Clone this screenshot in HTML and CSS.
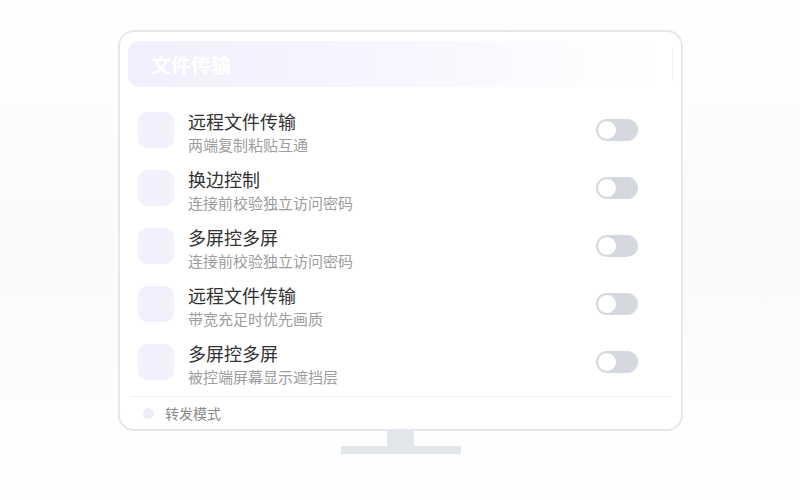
FILE: index.html
```html
<!DOCTYPE html>
<html lang="zh-CN">
<head>
    <meta charset="UTF-8">
    <meta name="viewport" content="width=device-width, initial-scale=1.0">
    <title>文件传输</title>
    <link rel="stylesheet" href="styles.css">
</head>
<body>
    <div class="monitor">
        <div class="screen">
            <div class="header">
                <span class="header-title">文件传输</span>
                <span class="header-line"></span>
            </div>

            <div class="list">
                <div class="row">
                    <div class="row-icon"></div>
                    <div class="row-text">
                        <div class="row-title">远程文件传输</div>
                        <div class="row-sub">两端复制粘贴互通</div>
                    </div>
                    <div class="switch"><span class="knob"></span></div>
                </div>
                <div class="row">
                    <div class="row-icon"></div>
                    <div class="row-text">
                        <div class="row-title">换边控制</div>
                        <div class="row-sub">连接前校验独立访问密码</div>
                    </div>
                    <div class="switch"><span class="knob"></span></div>
                </div>
                <div class="row">
                    <div class="row-icon"></div>
                    <div class="row-text">
                        <div class="row-title">多屏控多屏</div>
                        <div class="row-sub">连接前校验独立访问密码</div>
                    </div>
                    <div class="switch"><span class="knob"></span></div>
                </div>
                <div class="row">
                    <div class="row-icon"></div>
                    <div class="row-text">
                        <div class="row-title">远程文件传输</div>
                        <div class="row-sub">带宽充足时优先画质</div>
                    </div>
                    <div class="switch"><span class="knob"></span></div>
                </div>
                <div class="row">
                    <div class="row-icon"></div>
                    <div class="row-text">
                        <div class="row-title">多屏控多屏</div>
                        <div class="row-sub">被控端屏幕显示遮挡层</div>
                    </div>
                    <div class="switch"><span class="knob"></span></div>
                </div>
            </div>

            <!-- 底部 -->
            <div class="footer">
                <span class="dot"></span>
                <span class="footer-text">转发模式</span>
            </div>
        </div>
        <div class="neck"></div>
        <div class="base"></div>
    </div>
</body>
</html>
```

FILE: styles.css
```css
body {
    margin: 0;
    padding: 0;
    height: 500px;
    overflow: hidden;
    font-family: "Noto Sans CJK SC", "Noto Sans", sans-serif;
    background: linear-gradient(180deg, #ffffff 0%, #f9fafb 50%, #ffffff 100%);
}
.monitor {
    display: flex;
    flex-direction: column;
    align-items: center;
    padding-top: 30px;
    padding-left: 1px;
}
.screen {
    background: #ffffff;
    border: 2px solid #e4e7eb;
    border-radius: 16px;
    padding: 9px 8px 0 8px;
    width: 545px;
}
.header {
    height: 46px;
    border-radius: 12px;
    display: flex;
    align-items: center;
    justify-content: space-between;
    padding-left: 23px;
    background: linear-gradient(90deg, #f1effd 0%, #f7f5fe 45%, #ffffff 96%);
}
.header-title {
    color: #ffffff;
    font-size: 20px;
    font-weight: 700;
}
.header-line {
    width: 1px;
    height: 34px;
    background: #f1f2f5;
}
.list {
    padding: 14px 0 5px 0;
}
.row {
    display: flex;
    align-items: center;
    padding: 11px 35px 11px 10px;
}
.row-icon {
    width: 36px;
    height: 36px;
    border-radius: 9px;
    background: #f3f0fd;
    flex-shrink: 0;
}
.row-text {
    flex: 1;
    margin: -3px 0 -9px 14px; /* 文字块比图标高，只占图标的高度 */
}
.row-title {
    font-size: 18px;
    line-height: 24px;
    color: #333333;
}
.row-sub {
    font-size: 15px;
    line-height: 24px;
    color: #9d9d9d;
}
.switch {
    width: 42px;
    height: 22px;
    border-radius: 11px;
    background: #d5d8de;
    position: relative;
}
.knob {
    position: absolute;
    left: 1px;
    top: 1px;
    width: 18px;
    height: 18px;
    border-radius: 50%;
    background: #ffffff;
    border: 1px solid #d2d5db;
}
.footer {
    border-top: 1px solid #eeeff2;
    margin: 0 2px;
    height: 32px;
    display: flex;
    align-items: center;
    padding-left: 13px;
}
.dot {
    width: 11px;
    height: 11px;
    border-radius: 50%;
    background: #efecfc;
}
.footer-text {
    margin-left: 11px;
    font-size: 14px;
    color: #8a8a8a;
}
.neck {
    width: 27px;
    height: 15px;
    background: #e2e5ea;
}
.base {
    width: 120px;
    height: 8px;
    background: #e2e5ea;
}
```
